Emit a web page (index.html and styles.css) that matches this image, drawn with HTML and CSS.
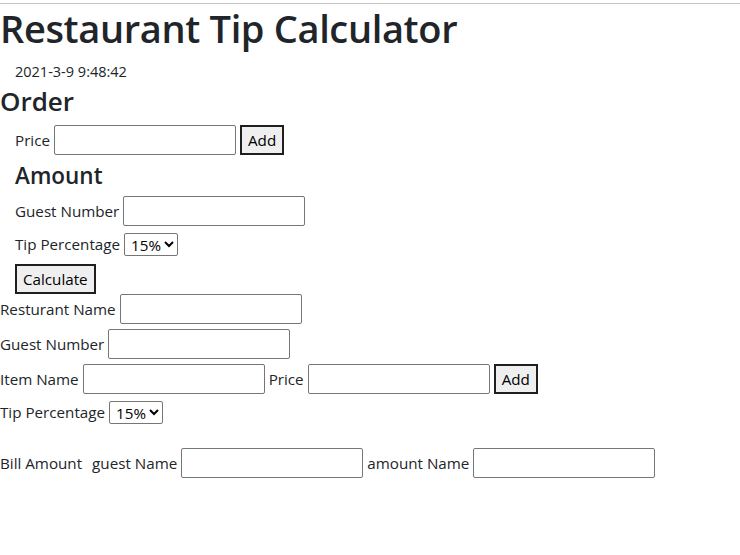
FILE: index.html
```html
<!DOCTYPE html>
<html lang="en">
<head>
<meta charset="utf-8">
<title>Restaurant Tip Calculator</title>
<link rel="stylesheet" href="styles.css">
</head>
<body>
<hr class="rule">
<h1 class="title">Restaurant Tip Calculator</h1>
<div class="date">2021-3-9 9:48:42</div>
<h3 class="order">Order</h3>
<div class="indent">
  <div class="row r-price"><label>Price</label><input class="field" type="text"><button class="btn">Add</button></div>
  <h4 class="amount">Amount</h4>
  <div class="row r-guest"><label>Guest Number</label><input class="field" type="text"></div>
  <div class="row r-tip"><label>Tip Percentage</label><select class="sel"><option>15%</option></select></div>
  <div class="row r-calc"><button class="btn">Calculate</button></div>
</div>
<div class="row r-rest"><label>Resturant Name</label><input class="field" type="text"></div>
<div class="row r-guest2"><label>Guest Number</label><input class="field" type="text"></div>
<div class="row r-item"><label>Item Name</label><input class="field" type="text"><label>Price</label><input class="field" type="text"><button class="btn">Add</button></div>
<div class="row r-tip2"><label>Tip Percentage</label><select class="sel"><option>15%</option></select></div>
<div class="row r-bill"><span class="bill">Bill Amount</span><label>guest Name</label><input class="field" type="text"><label>amount Name</label><input class="field" type="text"></div>
</body>
</html>
```

FILE: styles.css
```css
html, body {
  margin: 0;
  padding: 0;
  background: #fff;
}
body {
  font-family: "Open Sans", "Noto Sans", sans-serif;
  font-size: 15.2px;
  color: #212529;
  line-height: 1.5;
}
.rule {
  margin: 3px 0 0;
  border: 0;
  border-top: 1px solid #c4c4c4;
  height: 0;
}
.title {
  margin: 0;
  font-size: 38px;
  font-weight: 600;
  line-height: 48px;
  letter-spacing: -0.35px;
}
.date {
  padding-left: 15px;
  margin-top: 8px;
  line-height: 24px;
  font-size: 14.5px;
}
.order {
  margin: 0;
  font-size: 26px;
  font-weight: 600;
  line-height: 34px;
}
.indent {
  padding-left: 15px;
}
.amount {
  margin: 6px 0 0;
  font-size: 22.5px;
  font-weight: 600;
  line-height: 30px;
}
.row {
  display: flex;
  align-items: center;
  gap: 4px;
}
.row label, .row span {
  white-space: nowrap;
}
.r-price { margin-top: 7px; }
.r-guest { margin-top: 5px; }
.r-tip { margin-top: 7px; }
.r-calc { margin-top: 8px; }
.r-rest { margin-top: 0; }
.r-guest2 { margin-top: 5px; }
.r-item { margin-top: 5px; }
.r-tip2 { margin-top: 7px; }
.r-bill { margin-top: 24px; }
.bill { margin-right: 6px; }
.field {
  box-sizing: border-box;
  width: 182px;
  height: 30px;
  border: 1px solid #767676;
  border-radius: 2px;
  padding: 1px 2px;
  margin: 0;
  font: inherit;
  background: #fff;
}
.btn {
  box-sizing: border-box;
  height: 30px;
  border: 2px solid #1f1f1f;
  background: #efefef;
  color: #000;
  font: inherit;
  padding: 0 6px;
  margin: 0;
  border-radius: 0;
}
.sel {
  box-sizing: border-box;
  height: 23px;
  border: 1px solid #767676;
  border-radius: 2px;
  font: inherit;
  padding: 0 0 0 2px;
  margin: 0;
  background: #fff;
  color: #000;
}
```
